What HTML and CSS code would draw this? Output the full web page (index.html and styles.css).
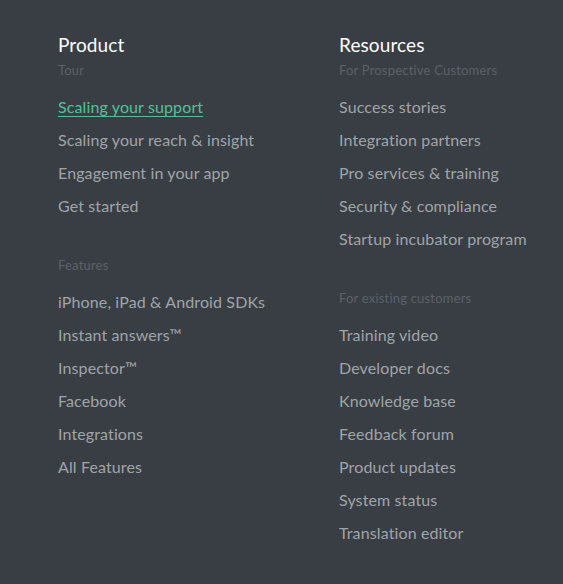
FILE: index.html
```html
<!DOCTYPE html>
<html>
<head>
<meta charset="utf-8">
<link rel="stylesheet" href="styles.css">
</head>
<body>
<footer class="footer">
  <div class="col col-product">
    <h3 class="col-title">Product</h3>
    <div class="group">
      <div class="group-title">Tour</div>
      <ul class="links">
        <li><a class="link active" href="#">Scaling your support</a></li>
        <li><a class="link" href="#">Scaling your reach &amp; insight</a></li>
        <li><a class="link" href="#">Engagement in your app</a></li>
        <li><a class="link" href="#">Get started</a></li>
      </ul>
    </div>
    <div class="group">
      <div class="group-title">Features</div>
      <ul class="links">
        <li><a class="link" href="#">iPhone, iPad &amp; Android SDKs</a></li>
        <li><a class="link" href="#">Instant answers™</a></li>
        <li><a class="link" href="#">Inspector™</a></li>
        <li><a class="link" href="#">Facebook</a></li>
        <li><a class="link" href="#">Integrations</a></li>
        <li><a class="link" href="#">All Features</a></li>
      </ul>
    </div>
  </div>
  <div class="col col-resources">
    <h3 class="col-title">Resources</h3>
    <div class="group">
      <div class="group-title">For Prospective Customers</div>
      <ul class="links">
        <li><a class="link" href="#">Success stories</a></li>
        <li><a class="link" href="#">Integration partners</a></li>
        <li><a class="link" href="#">Pro services &amp; training</a></li>
        <li><a class="link" href="#">Security &amp; compliance</a></li>
        <li><a class="link" href="#">Startup incubator program</a></li>
      </ul>
    </div>
    <div class="group">
      <div class="group-title">For existing customers</div>
      <ul class="links">
        <li><a class="link" href="#">Training video</a></li>
        <li><a class="link" href="#">Developer docs</a></li>
        <li><a class="link" href="#">Knowledge base</a></li>
        <li><a class="link" href="#">Feedback forum</a></li>
        <li><a class="link" href="#">Product updates</a></li>
        <li><a class="link" href="#">System status</a></li>
        <li><a class="link" href="#">Translation editor</a></li>
      </ul>
    </div>
  </div>
</footer>
</body>
</html>
```

FILE: styles.css
```css
html, body {
  margin: 0;
  padding: 0;
  background: #393e44;
  height: 100%;
}
.footer {
  display: grid;
  grid-template-columns: 281px 1fr;
  padding: 33px 0 0 58px;
  font-family: Lato, "Noto Sans", sans-serif;
}
.col-title {
  margin: 0;
  font-size: 19px;
  line-height: 24px;
  font-weight: 400;
  letter-spacing: 0.1px;
  color: #ffffff;
}
.group {
  margin-bottom: 33px;
}
.group-title {
  margin-top: 3px;
  font-size: 13px;
  line-height: 20px;
  letter-spacing: 0.2px;
  color: #5b6168;
}
.group + .group .group-title {
  margin-top: 0;
}
.links {
  list-style: none;
  margin: 10px 0 0 0;
  padding: 0;
}
.links li {
  font-size: 16px;
  line-height: 33px;
  letter-spacing: 0.12px;
}
.link {
  color: #a0a4a9;
  text-decoration: none;
}
.link.active {
  color: #4fc29b;
  text-decoration: underline;
  text-underline-offset: 3px;
}
```
